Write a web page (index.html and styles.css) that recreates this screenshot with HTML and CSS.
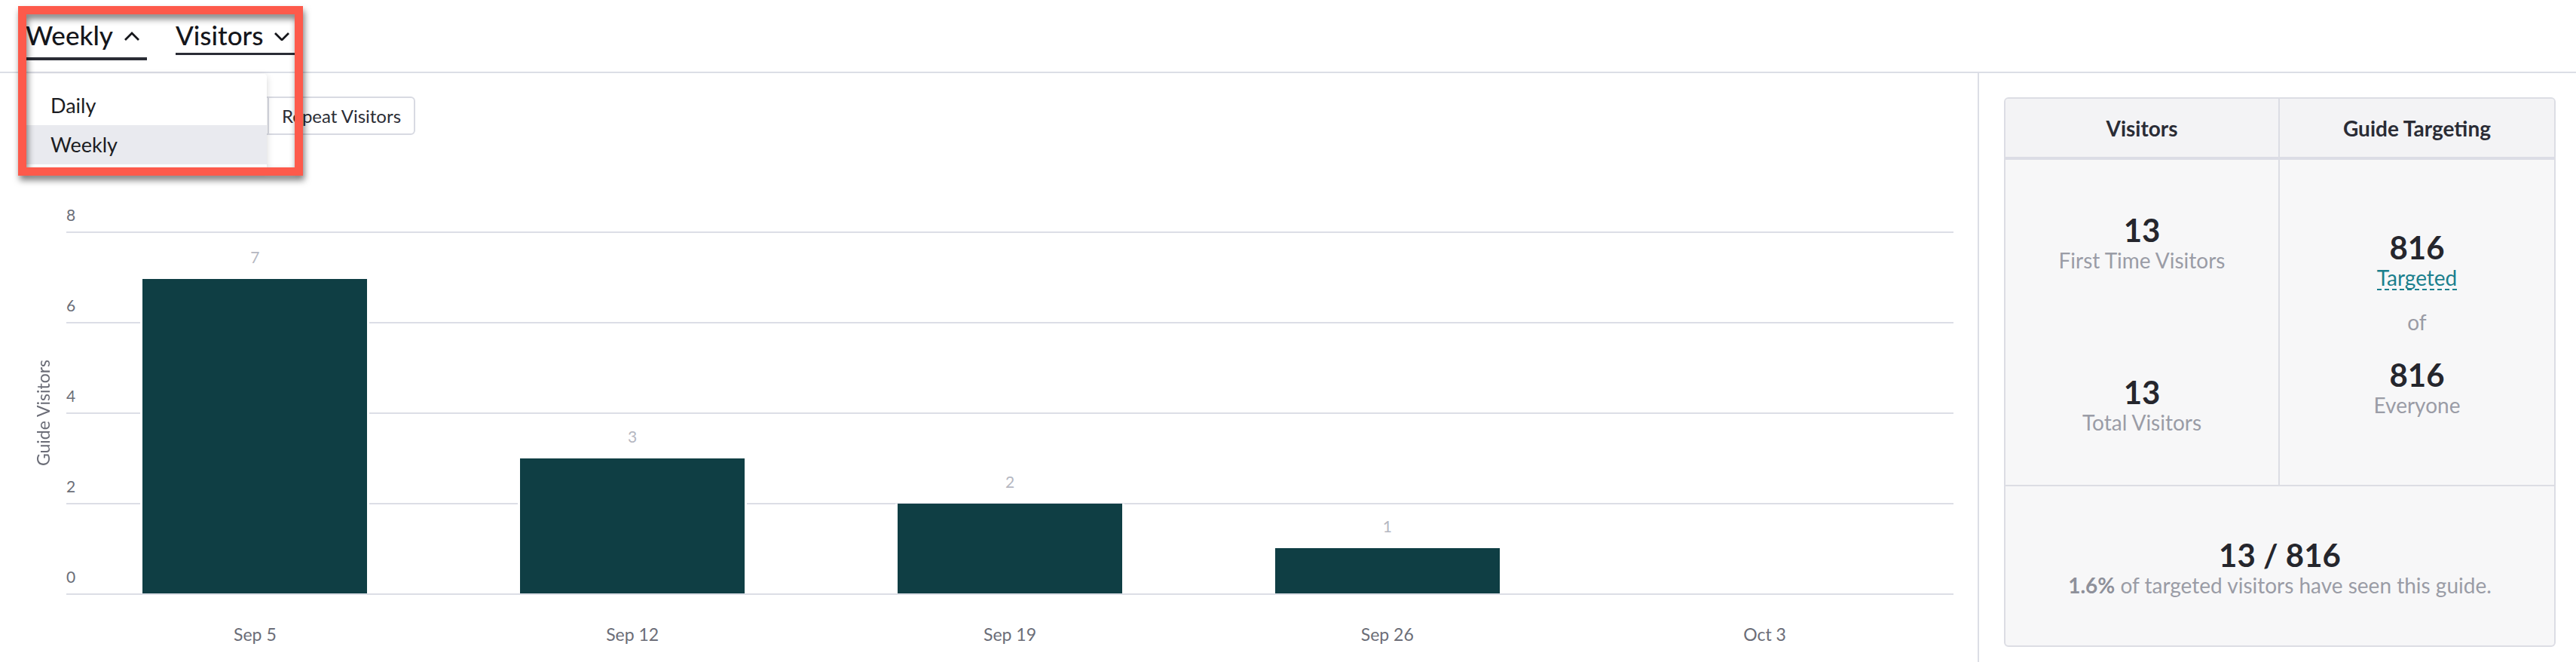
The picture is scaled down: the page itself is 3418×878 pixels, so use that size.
FILE: index.html
```html
<!DOCTYPE html>
<html lang="en">
<head>
  <meta charset="UTF-8" />
  <title>Guide Visitors</title>
  <link rel="stylesheet" href="styles.css">
</head>
<body>
  <div class="page">
    <header class="topbar">
      <div class="tab open">
        Weekly
        <svg class="chev" width="22" height="12" viewBox="0 0 22 12"><polyline points="2,11 11,2 20,11" /></svg>
      </div>
      <div class="tab">
        Visitors
        <svg class="chev" width="22" height="12" viewBox="0 0 22 12"><polyline points="2,2 11,11 20,2" /></svg>
      </div>
    </header>

    <!-- open period dropdown -->
    <div class="menu">
      <div class="menu-item">Daily</div>
      <div class="menu-item active">Weekly</div>
    </div>
    <div class="callout"></div>

    <main class="content">
      <section class="chart-pane">
        <div class="toolbar">
          <div class="seg">
            <div class="seg-btn b1">All</div>
            <div class="seg-btn b2">First Time</div>
            <div class="seg-btn b3">Repeat Visitors</div>
          </div>
        </div>

        <div class="chart">
          <div class="y-title"><span>Guide Visitors</span></div>
          <div class="plot">
            <div class="row first"><span>8</span></div>
            <div class="row"><span>6</span></div>
            <div class="row"><span>4</span></div>
            <div class="row"><span>2</span></div>
            <div class="row"><span>0</span></div>
            <div class="bars">
              <div class="col"><span class="val">7</span><div class="bar" style="height:417px"></div></div>
              <div class="col"><span class="val">3</span><div class="bar" style="height:179px"></div></div>
              <div class="col"><span class="val">2</span><div class="bar" style="height:119px"></div></div>
              <div class="col"><span class="val">1</span><div class="bar" style="height:60px"></div></div>
              <div class="col"></div>
            </div>
          </div>
          <div class="x-labels">
            <span>Sep 5</span>
            <span>Sep 12</span>
            <span>Sep 19</span>
            <span>Sep 26</span>
            <span>Oct 3</span>
          </div>
        </div>
      </section>

      <aside class="stats-pane">
        <div class="card">
          <div class="card-head">
            <div>Visitors</div>
            <div>Guide Targeting</div>
          </div>
          <div class="card-body">
            <div class="visitors-col">
              <div class="stat">
                <span class="num">13</span>
                <span class="lbl">First Time Visitors</span>
              </div>
              <div class="stat">
                <span class="num">13</span>
                <span class="lbl">Total Visitors</span>
              </div>
            </div>
            <div class="target-col">
              <span class="num">816</span>
              <span class="link">Targeted</span>
              <span class="lbl of">of</span>
              <span class="num">816</span>
              <span class="lbl">Everyone</span>
            </div>
          </div>
          <div class="card-foot">
            <span class="num">13 / 816</span>
            <span class="lbl"><b>1.6%</b> of targeted visitors have seen this guide.</span>
          </div>
        </div>
      </aside>
    </main>
  </div>
</body>
</html>
```

FILE: styles.css
```css
html, body { margin: 0; }
body {
  font-family: Lato, "Open Sans", sans-serif;
  background: #fff;
  color: #2a2c35;
  overflow: hidden;
}
.page { position: relative; width: 3418px; height: 878px; }

/* top tabs */
.topbar {
  box-sizing: border-box;
  height: 97px;
  border-bottom: 2px solid #dcdee6;
  display: flex;
  align-items: flex-start;
  gap: 38px;
  padding: 25px 0 0 34px;
}
.tab {
  display: flex;
  align-items: center;
  gap: 14px;
  font-size: 35px;
  font-weight: 500;
  line-height: 42px;
  color: #15161b;
  border-bottom: 3px solid #2a2c35;
  padding: 0 8px 3px 0;
}
.tab.open { border-bottom-width: 4px; padding: 0 9px 9px 0; }
.chev { margin-top: 4px; fill: none; stroke: #15161b; stroke-width: 2.8; }

/* dropdown + annotation */
.menu {
  position: absolute;
  left: 34px;
  top: 98px;
  width: 320px;
  padding: 16px 0 8px;
  background: #fff;
  border-radius: 4px;
  box-shadow: 0 3px 10px rgba(20, 22, 30, 0.18);
  z-index: 5;
}
.menu-item { font-size: 27px; line-height: 52px; padding-left: 33px; color: #1c1d23; }
.menu-item.active { background: #e9eaef; }
.callout {
  position: absolute;
  left: 24px;
  top: 8px;
  width: 378px;
  height: 225px;
  box-sizing: border-box;
  border: 11px solid #fd5a4b;
  filter: drop-shadow(2px 6px 4px rgba(0, 0, 0, 0.5));
  z-index: 6;
}

.content {
  display: grid;
  grid-template-columns: 2624px 1fr;
  height: 781px;
}

/* chart */
.chart-pane { padding-top: 31px; }
.toolbar { padding-left: 88px; }
.seg { display: flex; }
.seg-btn {
  box-sizing: border-box;
  height: 51px;
  border: 2px solid #d8dae2;
  background: #fff;
  font-size: 24px;
  color: #2a2c35;
  display: flex;
  align-items: center;
  justify-content: center;
}
.seg-btn + .seg-btn { margin-left: -2px; }
.b1 { width: 100px; border-radius: 6px 0 0 6px; }
.b2 { width: 171px; }
.b3 { width: 196px; border-radius: 0 6px 6px 0; }

.chart {
  margin-top: 93px;
  display: grid;
  grid-template-columns: 88px 2504px;
}
.y-title {
  display: flex;
  align-items: center;
  justify-content: center;
  padding: 35px 0 0 26px;
}
.y-title span {
  writing-mode: vertical-rl;
  transform: rotate(180deg);
  font-size: 23px;
  color: #6b6d77;
}
.plot { position: relative; }
.row {
  box-sizing: border-box;
  height: 120px;
  border-bottom: 2px solid #dcdee6;
  display: flex;
  align-items: flex-end;
  padding-bottom: 10px;
  font-size: 21px;
  line-height: 25px;
  color: #6b6e78;
}
.row.first { height: 37px; }
.bars {
  position: absolute;
  left: 0;
  right: 0;
  top: 0;
  bottom: 2px;
  display: grid;
  grid-template-columns: repeat(5, 1fr);
}
.col {
  display: flex;
  flex-direction: column;
  justify-content: flex-end;
  align-items: center;
}
.val { font-size: 21px; line-height: 25px; color: #b5b7c1; margin-bottom: 17px; }
.bar { width: 298px; background: #0f3e44; box-shadow: -3px 0 #fff, 3px 0 #fff; }
.x-labels {
  grid-column: 2;
  display: grid;
  grid-template-columns: repeat(5, 1fr);
  text-align: center;
  margin-top: 38px;
  font-size: 23px;
  color: #6b6d77;
}

/* stats */
.stats-pane {
  border-left: 2px solid #dcdee6;
  padding: 32px 27px 0 33px;
}
.card {
  border: 2px solid #dcdde4;
  border-radius: 6px;
  overflow: hidden;
  background: #f7f7f8;
}
.card-head {
  display: grid;
  grid-template-columns: 1fr 1fr;
  height: 77px;
  background: #f3f3f5;
  border-bottom: 4px solid #dcdde5;
}
.card-head div {
  display: flex;
  align-items: center;
  justify-content: center;
  font-size: 28px;
  font-weight: 700;
  color: #2a2c35;
}
.card-head div:first-child { border-right: 2px solid #dcdde4; }
.card-body {
  display: grid;
  grid-template-columns: 1fr 1fr;
  height: 431px;
  border-bottom: 2px solid #dcdde4;
}
.visitors-col {
  display: grid;
  grid-template-rows: 1fr 1fr;
  border-right: 2px solid #dcdde4;
}
.stat, .target-col, .card-foot {
  display: flex;
  flex-direction: column;
  align-items: center;
  justify-content: center;
}
.card-foot { height: 211px; }
.num { font-size: 42px; line-height: 50px; font-weight: 700; color: #25262d; }
.lbl { font-size: 28px; line-height: 30px; color: #9a9ca6; }
.lbl b { color: #8e909a; }
.link {
  font-size: 28px;
  line-height: 30px;
  color: #1b7f8d;
  border-bottom: 2px dashed #1b7f8d;
}
.of { margin: 27px 0 30px; }
```
